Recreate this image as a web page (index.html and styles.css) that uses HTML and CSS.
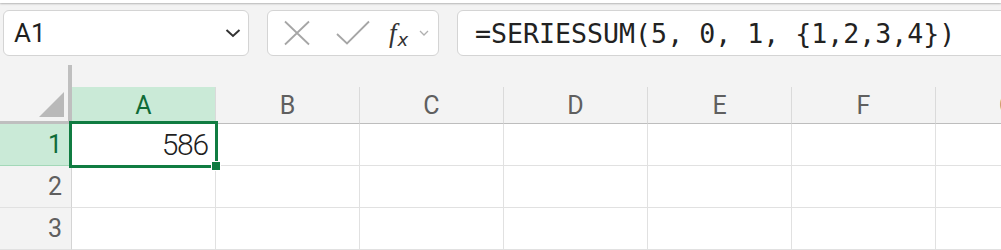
FILE: index.html
```html
<!DOCTYPE html>
<html lang="en">
<head>
    <meta charset="UTF-8" />
    <title>SERIESSUM</title>
    <link rel="stylesheet" href="styles.css">
</head>
<body>

    <div class="ribbon-edge"></div>

    <div class="formula-bar">
        <div class="name-box">
            <span>A1</span>
            <svg class="chevron" width="16" height="10" viewBox="0 0 16 10">
                <path d="M1.5 2 L8 8 L14.5 2" fill="none" stroke="#333" stroke-width="2" />
            </svg>
        </div>

        <div class="fx-box">
            <svg width="28" height="26" viewBox="0 0 28 26">
                <path d="M2 1.5 L26 24.5 M26 1.5 L2 24.5" fill="none" stroke="#a6a6a6" stroke-width="1.8" />
            </svg>
            <svg width="34" height="26" viewBox="0 0 34 26">
                <path d="M1 14 L11 23.5 L33 1.5" fill="none" stroke="#a6a6a6" stroke-width="1.8" />
            </svg>
            <span class="fx"><i>f</i><i class="fx-x">x</i></span>
            <svg class="mini-chevron" width="10" height="6" viewBox="0 0 10 6">
                <path d="M1 1 L5 5 L9 1" fill="none" stroke="#b0b0b0" stroke-width="1.3" />
            </svg>
        </div>

        <div class="formula">=SERIESSUM(5, 0, 1, {1,2,3,4})</div>
    </div>

    <div class="sheet">
        <div class="corner">
            <svg width="25" height="25" viewBox="0 0 25 25">
                <polygon points="25,0 25,25 0,25" fill="#b9b9b9" />
            </svg>
        </div>
        <div class="top-gap"></div>

        <div class="col-head active">A</div>
        <div class="col-head">B</div>
        <div class="col-head">C</div>
        <div class="col-head">D</div>
        <div class="col-head">E</div>
        <div class="col-head">F</div>
        <div class="col-head">G</div>

        <div class="row-head active">1</div>
        <div class="cell num">586</div>
        <div class="cell"></div>
        <div class="cell"></div>
        <div class="cell"></div>
        <div class="cell"></div>
        <div class="cell"></div>
        <div class="cell"></div>

        <div class="row-head">2</div>
        <div class="cell"></div>
        <div class="cell"></div>
        <div class="cell"></div>
        <div class="cell"></div>
        <div class="cell"></div>
        <div class="cell"></div>
        <div class="cell"></div>

        <div class="row-head">3</div>
        <div class="cell"></div>
        <div class="cell"></div>
        <div class="cell"></div>
        <div class="cell"></div>
        <div class="cell"></div>
        <div class="cell"></div>
        <div class="cell"></div>

        <!-- zaznaczenie komorki A1 -->
        <div class="selection"></div>
        <div class="handle"></div>
    </div>

</body>
</html>
```

FILE: styles.css
```css
body {
    font-family: Roboto, "Noto Sans", sans-serif;
    background-color: #f3f3f3;
    margin: 0;
    overflow: hidden;
}

.ribbon-edge {
    height: 3px;
    background-color: #ffffff;
    box-shadow: 0 1px 2px rgba(0, 0, 0, 0.25);
}

.formula-bar {
    display: flex;
    gap: 18px;
    margin: 7px 0 0 3px;
    height: 46px;
}

.name-box,
.fx-box,
.formula {
    box-sizing: border-box;
    height: 46px;
    background-color: #ffffff;
    border: 1px solid #d4d4d4;
    border-radius: 6px;
    display: flex;
    align-items: center;
}

.name-box {
    width: 246px;
    padding: 0 6px 0 10px;
    justify-content: space-between;
    font-size: 26px;
    color: #1f1f1f;
}

.chevron {
    margin-right: 1px;
}

.fx-box {
    width: 172px;
    padding-left: 15px;
}

.fx-box svg:nth-child(2) {
    margin-left: 25px;
}

.fx {
    font-family: "Liberation Serif", serif;
    font-size: 27px;
    color: #333333;
    margin-left: 19px;
    line-height: 1;
}

.fx-x {
    font-family: "DejaVu Sans", sans-serif;
    font-size: 18px;
    position: relative;
    top: 4px;
    margin-left: 1px;
}

.mini-chevron {
    margin-left: 11px;
}

.formula {
    flex: 1;
    margin-right: -20px;
    padding-left: 17px;
    font-family: "DejaVu Sans Mono", monospace;
    font-size: 26.6px;
    color: #222222;
}

.sheet {
    position: relative;
    margin-top: 9px;
    display: grid;
    grid-template-columns: 72px repeat(7, 144px);
    grid-template-rows: 22px 37px 42px 42px 42px;
}

.corner {
    grid-row: 1 / 3;
    grid-column: 1;
    box-sizing: border-box;
    border-right: 4px solid #bfbfbf;
    border-bottom: 3px solid #bfbfbf;
    display: flex;
    align-items: flex-end;
    justify-content: flex-end;
    padding: 0 4px 4px 0;
}

.top-gap {
    grid-row: 1;
    grid-column: 2 / -1;
}

.col-head {
    grid-row: 2;
    box-sizing: border-box;
    border-right: 1px solid #dadada;
    border-bottom: 1px solid #bdbdbd;
    display: flex;
    align-items: center;
    justify-content: center;
    font-size: 25px;
    color: #5f5f5f;
}

.col-head.active {
    background-color: #caead7;
    color: #0f6b37;
    border-bottom: 3px solid #107c41;
    padding-top: 2px;
}

.row-head {
    grid-column: 1;
    box-sizing: border-box;
    border-right: 1px solid #d4d4d4;
    border-bottom: 1px solid #e1e1e1;
    display: flex;
    align-items: center;
    justify-content: flex-end;
    padding-right: 9px;
    font-size: 25px;
    color: #5f5f5f;
}

.row-head.active {
    background-color: #caead7;
    color: #0f6b37;
    border-bottom-color: #a3d8b8;
}

.cell {
    box-sizing: border-box;
    background-color: #ffffff;
    border-right: 1px solid #e1e1e1;
    border-bottom: 1px solid #e1e1e1;
}

.num {
    display: flex;
    align-items: center;
    justify-content: flex-end;
    padding-right: 7px;
    font-size: 30px;
    font-weight: 300;
    letter-spacing: -1.2px;
    color: #1f1f1f;
}

.selection {
    position: absolute;
    left: 69px;
    top: 56px;
    width: 149px;
    height: 47px;
    box-sizing: border-box;
    border: 3px solid #107c41;
}

.handle {
    position: absolute;
    left: 211px;
    top: 96px;
    width: 8px;
    height: 8px;
    background-color: #107c41;
    border: 1px solid #ffffff;
}
```
